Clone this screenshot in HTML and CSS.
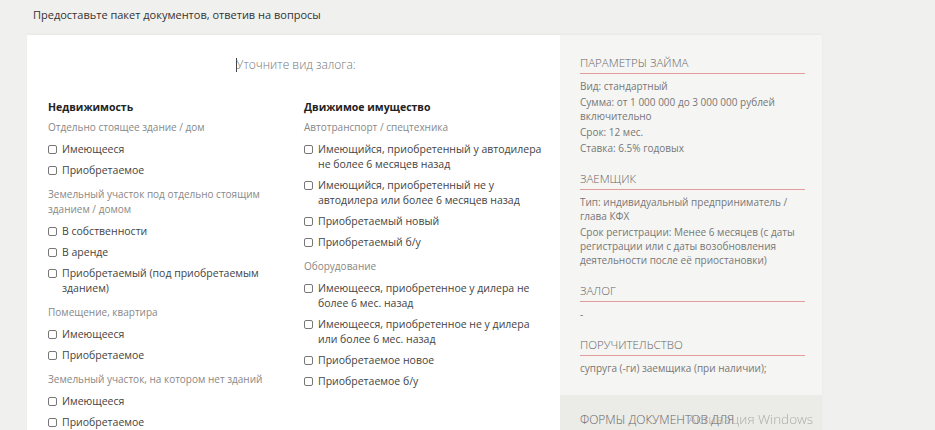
FILE: index.html
```html
<!DOCTYPE html>
<html lang="ru">
<head>
<meta charset="utf-8">
<title>Пакет документов</title>
<link rel="stylesheet" href="styles.css">
</head>
<body>
<div class="page">
  <h1 class="title">Предоставьте пакет документов, ответив на вопросы</h1>
  <div class="card">
    <main class="main">
      <p class="lead"><span class="caret"></span>Уточните вид залога:</p>
      <div class="cols">
        <section class="col">
          <h2 class="col-title">Недвижимость</h2>
          <div class="group">
            <p class="sub">Отдельно стоящее здание / дом</p>
            <label class="item"><input type="checkbox"><span>Имеющееся</span></label>
            <label class="item"><input type="checkbox"><span>Приобретаемое</span></label>
          </div>
          <div class="group">
            <p class="sub">Земельный участок под отдельно стоящим зданием / домом</p>
            <label class="item"><input type="checkbox"><span>В собственности</span></label>
            <label class="item"><input type="checkbox"><span>В аренде</span></label>
            <label class="item"><input type="checkbox"><span>Приобретаемый (под приобретаемым зданием)</span></label>
          </div>
          <div class="group">
            <p class="sub">Помещение, квартира</p>
            <label class="item"><input type="checkbox"><span>Имеющееся</span></label>
            <label class="item"><input type="checkbox"><span>Приобретаемое</span></label>
          </div>
          <div class="group">
            <p class="sub">Земельный участок, на котором нет зданий</p>
            <label class="item"><input type="checkbox"><span>Имеющееся</span></label>
            <label class="item"><input type="checkbox"><span>Приобретаемое</span></label>
          </div>
        </section>
        <section class="col">
          <h2 class="col-title">Движимое имущество</h2>
          <div class="group">
            <p class="sub">Автотранспорт / спецтехника</p>
            <label class="item"><input type="checkbox"><span>Имеющийся, приобретенный у автодилера не более 6 месяцев назад</span></label>
            <label class="item"><input type="checkbox"><span>Имеющийся, приобретенный не у автодилера или более 6 месяцев назад</span></label>
            <label class="item"><input type="checkbox"><span>Приобретаемый новый</span></label>
            <label class="item"><input type="checkbox"><span>Приобретаемый б/у</span></label>
          </div>
          <div class="group">
            <p class="sub">Оборудование</p>
            <label class="item"><input type="checkbox"><span>Имеющееся, приобретенное у дилера не более 6 мес. назад</span></label>
            <label class="item"><input type="checkbox"><span>Имеющееся, приобретенное не у дилера или более 6 мес. назад</span></label>
            <label class="item"><input type="checkbox"><span>Приобретаемое новое</span></label>
            <label class="item"><input type="checkbox"><span>Приобретаемое б/у</span></label>
          </div>
        </section>
      </div>
    </main>
    <aside class="side">
      <div class="side-info">
        <h3 class="side-title">Параметры займа</h3>
        <p class="side-text">Вид: стандартный</p>
        <p class="side-text">Сумма: от 1 000 000 до 3 000 000 рублей включительно</p>
        <p class="side-text">Срок: 12 мес.</p>
        <p class="side-text">Ставка: 6.5% годовых</p>

        <h3 class="side-title">Заемщик</h3>
        <p class="side-text">Тип: индивидуальный предприниматель / глава КФХ</p>
        <p class="side-text">Срок регистрации: Менее 6 месяцев (с даты регистрации или с даты возобновления деятельности после её приостановки)</p>

        <h3 class="side-title">Залог</h3>
        <p class="side-text">-</p>

        <h3 class="side-title">Поручительство</h3>
        <p class="side-text">супруга (-ги) заемщика (при наличии);</p>
      </div>
      <div class="side-forms">
        <h3 class="forms-title">Формы документов для</h3>
      </div>
    </aside>
  </div>
</div>
<div class="watermark">Активация Windows</div>
</body>
</html>
```

FILE: styles.css
```css
* { box-sizing: border-box; }

html, body {
  margin: 0;
  padding: 0;
  background: #f0f0ee;
  font-family: "Open Sans", "Liberation Sans", sans-serif;
  color: #333;
  overflow: hidden;
}

.page {
  padding: 5px 0 0 27px;
}

.title {
  margin: 0 0 0 6px;
  font-size: 11px;
  font-weight: 400;
  line-height: 19px;
  height: 30px;
  color: #333;
}

.card {
  display: flex;
  width: 795px;
  box-shadow: 0 -1px 2px rgba(0, 0, 0, 0.04);
}

.main {
  width: 533px;
  background: #fff;
  padding: 20px 14px 20px 21px;
}

.lead {
  margin: 0 0 0 -2px;
  text-align: center;
  font-size: 12px;
  font-weight: 300;
  line-height: 20px;
  color: #777;
}

.caret {
  display: inline-block;
  width: 0;
  height: 14px;
  border-left: 1px solid #444;
  vertical-align: -3px;
  margin-right: -1px;
}

.cols {
  display: grid;
  grid-template-columns: 236px 242px;
  column-gap: 20px;
  margin-top: 23px;
}

.col-title {
  margin: 0;
  font-size: 10.5px;
  font-weight: 700;
  line-height: 18px;
  color: #222;
}

.group {
  margin-top: 9px;
  display: flex;
  flex-direction: column;
  gap: 6px;
}

.col-title + .group {
  margin-top: 4px;
}

.sub {
  margin: 0 0 1px;
  font-size: 10px;
  line-height: 15px;
  color: #888;
}

.item {
  display: flex;
  align-items: flex-start;
  font-size: 10.5px;
  line-height: 15px;
  color: #444;
}

.item input {
  appearance: none;
  -webkit-appearance: none;
  flex: none;
  width: 9px;
  height: 9px;
  margin: 3px 5px 0 0;
  border: 1px solid #777;
  border-radius: 2px;
  background: #fff;
}

.side {
  flex: 1;
  display: flex;
  flex-direction: column;
  background: #f5f5f3;
}

.side-info {
  padding: 20px 17px 20px 20px;
}

.side-title {
  margin: 16px 0 0;
  padding-bottom: 2px;
  border-bottom: 1px solid #e39c9c;
  font-size: 11.5px;
  font-weight: 300;
  line-height: 16px;
  text-transform: uppercase;
  color: #666;
}

.side-title:first-child {
  margin-top: 0;
}

.side-title + .side-text {
  margin-top: 5px;
}

.side-text {
  margin: 2px 0 0;
  font-size: 10px;
  line-height: 14px;
  color: #777;
}

.side-forms {
  flex: 1;
  background: #ebebe8;
  padding: 16px 17px 20px 20px;
  min-height: 60px;
}

.forms-title {
  margin: 0;
  font-size: 12px;
  font-weight: 300;
  line-height: 18px;
  text-transform: uppercase;
  color: #666;
}

.watermark {
  position: fixed;
  left: 688px;
  top: 410px;
  font-family: "Open Sans", "Liberation Sans", sans-serif;
  font-size: 13.5px;
  font-weight: 300;
  color: rgba(150, 150, 150, 0.75);
  pointer-events: none;
}
```
